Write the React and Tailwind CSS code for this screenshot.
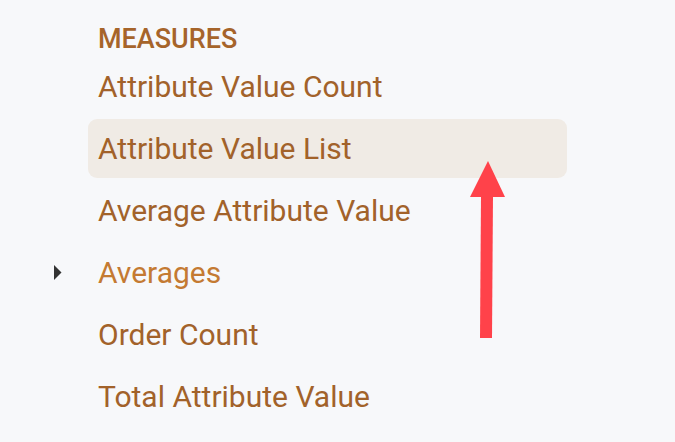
import React from "react";

const items = [
  { label: "Attribute Value Count" },
  { label: "Attribute Value List", active: true },
  { label: "Average Attribute Value" },
  { label: "Averages", group: true },
  { label: "Order Count" },
  { label: "Total Attribute Value" },
];

export default function App() {
  return (
    <div
      className="relative w-[675px] h-[442px] overflow-hidden bg-[#f7f8fa]"
      style={{ fontFamily: "Roboto, 'Noto Sans', sans-serif" }}
    >
      <div className="flex flex-col pt-[23px] pl-[88px] w-[567px]">
        <div className="h-[32px] flex items-center pl-[10px] text-[27px] font-medium leading-none text-[#a6642a]">
          MEASURES
        </div>
        <div className="flex flex-col gap-[3.2px] mt-[2px]">
          {items.map((it) => (
            <div
              key={it.label}
              className={
                "relative h-[59px] flex items-center pl-[10px] rounded-[9px] text-[30px] leading-none " +
                (it.active ? "bg-[#f0ebe5] " : "") +
                (it.group ? "text-[#c47a32]" : "text-[#a2622a]")
              }
            >
              {it.group && (
                <svg
                  className="absolute left-[-34px] top-1/2 -translate-y-1/2"
                  width="9"
                  height="16"
                  viewBox="0 0 9 16"
                >
                  <polygon points="0,0 0,15 7.5,7.5" fill="#333333" />
                </svg>
              )}
              {it.label}
            </div>
          ))}
        </div>
      </div>
      <svg
        className="absolute left-0 top-0 pointer-events-none"
        width="675"
        height="442"
        viewBox="0 0 675 442"
      >
        <polygon points="488,161 470,197 505,197" fill="#ff424a" />
        <polygon points="481,196 493,196 492,338 480,338" fill="#ff424a" />
      </svg>
    </div>
  );
}
